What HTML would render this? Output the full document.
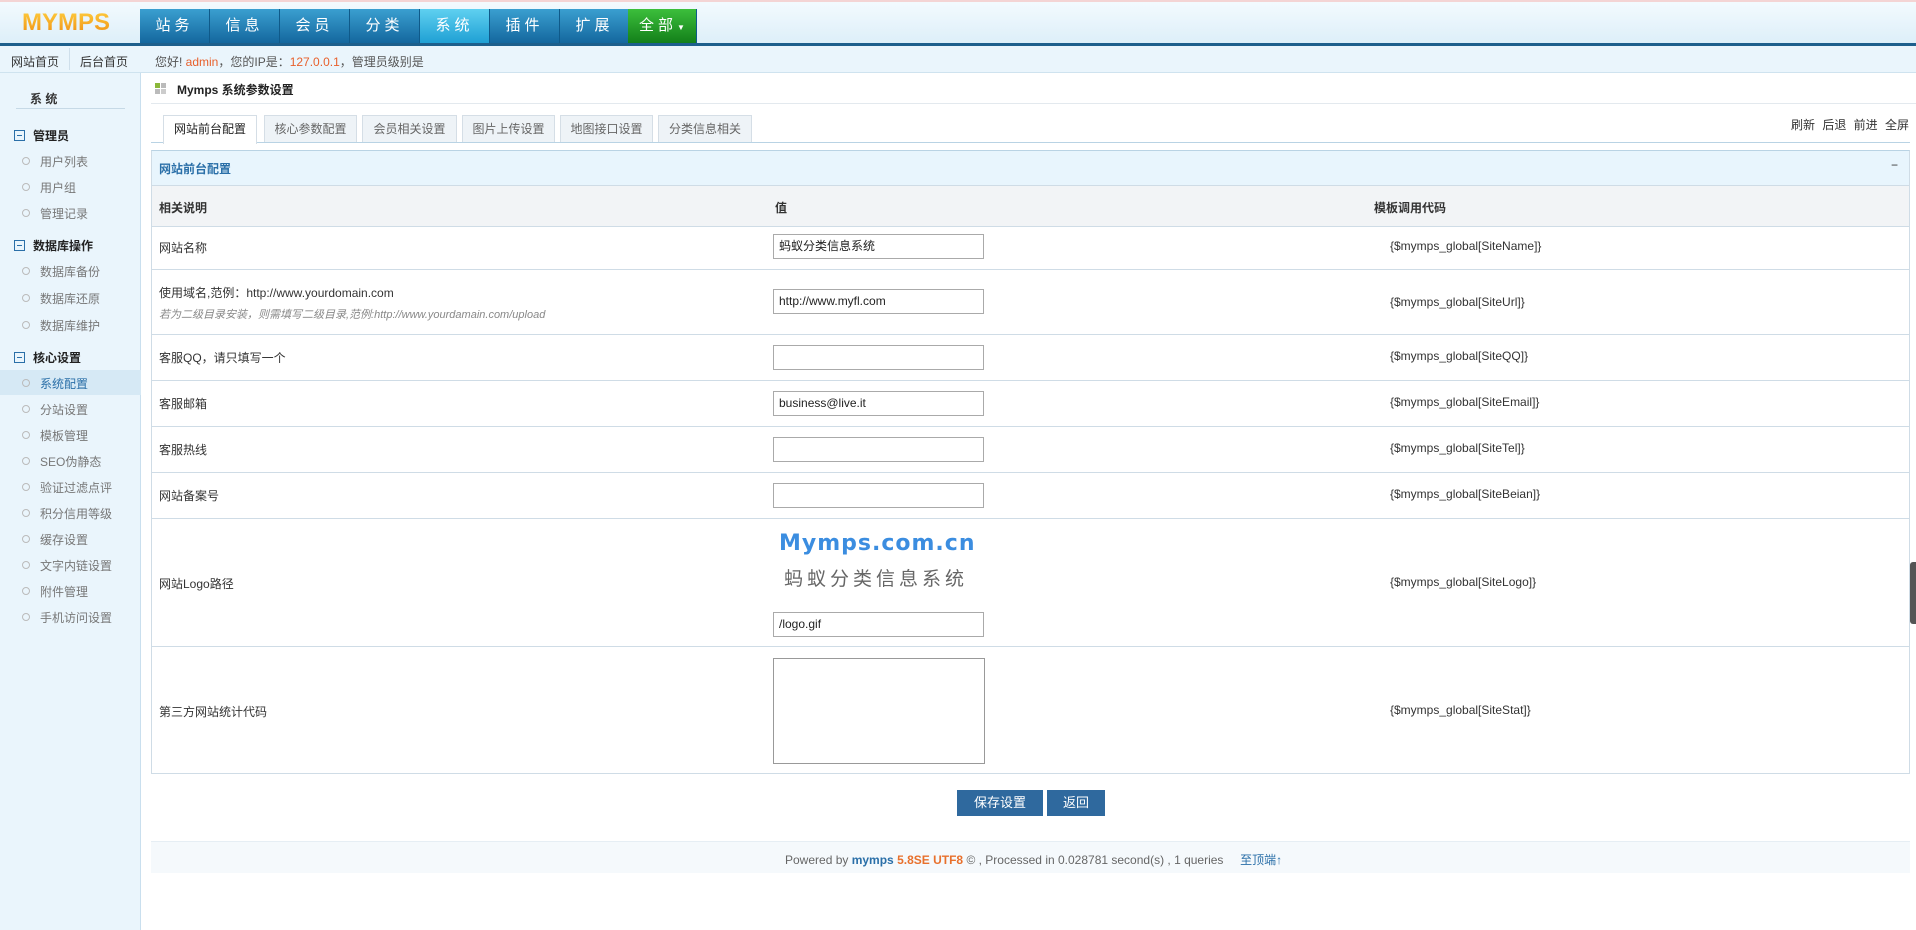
<!DOCTYPE html>
<html><head><meta charset="utf-8"><style>
*{margin:0;padding:0;box-sizing:border-box}
body{width:1916px;height:930px;overflow:hidden;background:#fff;font-family:"Liberation Sans","Noto Sans CJK SC",sans-serif;font-size:12px;color:#333;position:relative}
.a{position:absolute}
#top{left:0;top:0;width:1916px;height:43px;background:linear-gradient(#f3fafe,#ddeff9);border-top:2px solid #f4d4d4}
#logo{left:22px;top:9px;font-size:24px;font-weight:bold;letter-spacing:0px;background:linear-gradient(#ffd040,#ee8a10);-webkit-background-clip:text;color:transparent}
.nav{top:9px;height:34px;width:70px;background:linear-gradient(#3a9fd0,#14679e);color:#fff;font-size:15px;text-align:center;line-height:34px;letter-spacing:4px;border-right:1px solid #0f5a8a}
#line{left:0;top:43px;width:1916px;height:3px;background:#1d5f8c}
#bar2{left:0;top:46px;width:1916px;height:27px;background:#eaf5fc;border-bottom:1px solid #cfe3ef}
#side{left:0;top:73px;width:141px;height:857px;background:#eaf5fc;border-right:1px solid #c9dfee}
.grp{left:14px;font-size:12px;font-weight:bold;color:#222}
.grp i{display:inline-block;width:11px;height:11px;border:1px solid #2a6fa8;margin-right:8px;vertical-align:-1px;position:relative}
.grp i:after{content:"";position:absolute;left:2px;top:4px;width:5px;height:1px;background:#2a6fa8}
.it{left:22px;font-size:12px;color:#777}
.it:before{content:"";display:inline-block;width:6px;height:6px;border:1px solid #bbb;border-radius:50%;margin-right:10px;vertical-align:1px}
.tab{top:115px;height:28px;border:1px solid #d5dee6;border-bottom:none;background:#eef3f7;color:#666;text-align:center;line-height:26px;font-size:12px}
.row{left:151px;width:1759px;border-bottom:1px solid #cfdce6;border-left:1px solid #cfdce6;border-right:1px solid #cfdce6}
.lb{left:159px;font-size:12px;color:#333}
.cd{left:1390px;font-size:12px;color:#333}
.in{left:773px;width:211px;height:25px;border:1px solid #aaa;background:#fff;font-size:12px;padding-left:5px;line-height:23px;color:#222}
</style></head><body>
<div id="top" class="a"></div>
<div id="logo" class="a">MYMPS</div>
<div class="a nav" style="left:140px">站务</div>
<div class="a nav" style="left:210px">信息</div>
<div class="a nav" style="left:280px">会员</div>
<div class="a nav" style="left:350px">分类</div>
<div class="a nav" style="left:420px;background:linear-gradient(#5fd0f0,#1fa0d4)">系统</div>
<div class="a nav" style="left:490px">插件</div>
<div class="a nav" style="left:560px">扩展</div>
<div class="a nav" style="left:628px;background:linear-gradient(#3cbf3c,#137f1a);width:69px">全部<span style="font-size:8px;letter-spacing:0">▼</span></div>
<div id="line" class="a"></div>
<div id="bar2" class="a"></div>
<div class="a" style="left:11px;top:53px;font-size:12px;color:#333">网站首页</div>
<div class="a" style="left:69px;top:48px;width:1px;height:22px;background:#cfdfeb"></div>
<div class="a" style="left:80px;top:53px;font-size:12px;color:#333">后台首页</div>
<div class="a" style="left:155px;top:53px;font-size:12px;color:#555">您好! <span style="color:#e8602c">admin</span>，您的IP是：<span style="color:#e8602c">127.0.0.1</span>，管理员级别是</div>
<div id="side" class="a"></div>
<div class="a" style="left:30px;top:90px;font-size:12px;font-weight:bold;color:#333">系 统</div>
<div class="a" style="left:16px;top:108px;width:109px;height:1px;background:#c6d9e6"></div>
<div class="a grp" style="top:127px"><i></i>管理员</div>
<div class="a it" style="top:153px">用户列表</div>
<div class="a it" style="top:179px">用户组</div>
<div class="a it" style="top:205px">管理记录</div>
<div class="a grp" style="top:237px"><i></i>数据库操作</div>
<div class="a it" style="top:263px">数据库备份</div>
<div class="a it" style="top:290px">数据库还原</div>
<div class="a it" style="top:317px">数据库维护</div>
<div class="a grp" style="top:349px"><i></i>核心设置</div>
<div class="a" style="left:0;top:370px;width:141px;height:25px;background:#d6e9f5"></div>
<div class="a it" style="top:375px;color:#2a6fa8">系统配置</div>
<div class="a it" style="top:401px">分站设置</div>
<div class="a it" style="top:427px">模板管理</div>
<div class="a it" style="top:453px">SEO伪静态</div>
<div class="a it" style="top:479px">验证过滤点评</div>
<div class="a it" style="top:505px">积分信用等级</div>
<div class="a it" style="top:531px">缓存设置</div>
<div class="a it" style="top:557px">文字内链设置</div>
<div class="a it" style="top:583px">附件管理</div>
<div class="a it" style="top:609px">手机访问设置</div>

<div class="a" style="left:155px;top:83px;width:5px;height:5px;background:#8bb83a"></div>
<div class="a" style="left:161px;top:83px;width:5px;height:5px;background:#bbb"></div>
<div class="a" style="left:155px;top:89px;width:5px;height:5px;background:#bbb"></div>
<div class="a" style="left:161px;top:89px;width:5px;height:5px;background:#ccc"></div>
<div class="a" style="left:177px;top:81px;font-size:12px;font-weight:bold;color:#222">Mymps 系统参数设置</div>
<div class="a" style="left:1791px;top:116px;font-size:12px;color:#333;word-spacing:4px">刷新 后退 前进 全屏</div>
<div class="a" style="left:151px;top:103px;width:1765px;height:1px;background:#e3e9ee"></div>
<div class="a tab" style="left:163px;width:94px;background:#fff;color:#222;height:29px;z-index:2">网站前台配置</div>
<div class="a tab" style="left:264px;width:93px">核心参数配置</div>
<div class="a tab" style="left:362px;width:95px">会员相关设置</div>
<div class="a tab" style="left:462px;width:93px">图片上传设置</div>
<div class="a tab" style="left:560px;width:93px">地图接口设置</div>
<div class="a tab" style="left:658px;width:94px">分类信息相关</div>
<div class="a" style="left:151px;top:142px;width:1759px;height:1px;background:#b9d3e4"></div>

<div class="a row" style="top:150px;height:36px;background:#e8f5fd;border-top:1px solid #b9d3e4"></div>
<div class="a" style="left:159px;top:160px;font-size:12px;font-weight:bold;color:#2a6fa8">网站前台配置</div>
<div class="a" style="left:1891px;top:158px;font-size:12px;color:#333">−</div>
<div class="a row" style="top:186px;height:41px;background:#f2f4f6"></div>
<div class="a lb" style="top:199px;font-weight:bold">相关说明</div>
<div class="a" style="left:775px;top:199px;font-weight:bold">值</div>
<div class="a cd" style="left:1374px;top:199px;font-weight:bold">模板调用代码</div>

<div class="a row" style="top:227px;height:43px"></div>
<div class="a lb" style="top:239px">网站名称</div>
<div class="a in" style="top:234px">蚂蚁分类信息系统</div>
<div class="a cd" style="top:239px">{$mymps_global[SiteName]}</div>

<div class="a row" style="top:270px;height:65px"></div>
<div class="a lb" style="top:284px">使用域名,范例：http://www.yourdomain.com</div>
<div class="a lb" style="top:306px;font-style:italic;color:#888;font-size:11px">若为二级目录安装，则需填写二级目录,范例:http://www.yourdamain.com/upload</div>
<div class="a in" style="top:289px">http://www.myfl.com</div>
<div class="a cd" style="top:295px">{$mymps_global[SiteUrl]}</div>

<div class="a row" style="top:335px;height:46px"></div>
<div class="a lb" style="top:349px">客服QQ，请只填写一个</div>
<div class="a in" style="top:345px"></div>
<div class="a cd" style="top:349px">{$mymps_global[SiteQQ]}</div>

<div class="a row" style="top:381px;height:46px"></div>
<div class="a lb" style="top:395px">客服邮箱</div>
<div class="a in" style="top:391px">business@live.it</div>
<div class="a cd" style="top:395px">{$mymps_global[SiteEmail]}</div>

<div class="a row" style="top:427px;height:46px"></div>
<div class="a lb" style="top:441px">客服热线</div>
<div class="a in" style="top:437px"></div>
<div class="a cd" style="top:441px">{$mymps_global[SiteTel]}</div>

<div class="a row" style="top:473px;height:46px"></div>
<div class="a lb" style="top:487px">网站备案号</div>
<div class="a in" style="top:483px"></div>
<div class="a cd" style="top:487px">{$mymps_global[SiteBeian]}</div>

<div class="a row" style="top:519px;height:128px"></div>
<div class="a lb" style="top:575px">网站Logo路径</div>
<div class="a" style="left:779px;top:531px;font-size:22px;font-weight:bold;color:#3b8de0;letter-spacing:1px;font-family:'DejaVu Sans',sans-serif">Mymps.com.cn</div>
<div class="a" style="left:784px;top:564px;font-size:19px;color:#666;letter-spacing:4px">蚂蚁分类信息系统</div>
<div class="a in" style="top:612px">/logo.gif</div>
<div class="a cd" style="top:575px">{$mymps_global[SiteLogo]}</div>

<div class="a row" style="top:647px;height:127px"></div>
<div class="a lb" style="top:703px">第三方网站统计代码</div>
<div class="a in" style="top:658px;height:106px;width:212px;border-color:#999"></div>
<div class="a cd" style="top:703px">{$mymps_global[SiteStat]}</div>

<div class="a" style="left:957px;top:790px;width:86px;height:26px;background:#2f699e;color:#fff;font-size:13px;text-align:center;line-height:26px">保存设置</div>
<div class="a" style="left:1047px;top:790px;width:58px;height:26px;background:#2f699e;color:#fff;font-size:13px;text-align:center;line-height:26px">返回</div>

<div class="a" style="left:151px;top:841px;width:1759px;height:32px;background:#f5f9fc;border-top:1px solid #e6eef4"></div>
<div class="a" style="left:785px;top:851px;font-size:12px;color:#666">Powered by <b style="color:#2a6fa8">mymps</b> <b style="color:#e8702c">5.8SE UTF8</b> © , Processed in 0.028781 second(s) , 1 queries &nbsp;&nbsp;&nbsp; <span style="color:#2a6fa8">至顶端↑</span></div>
<div class="a" style="left:1910px;top:562px;width:6px;height:62px;background:#555;border-radius:3px 0 0 3px"></div>
</body></html>
